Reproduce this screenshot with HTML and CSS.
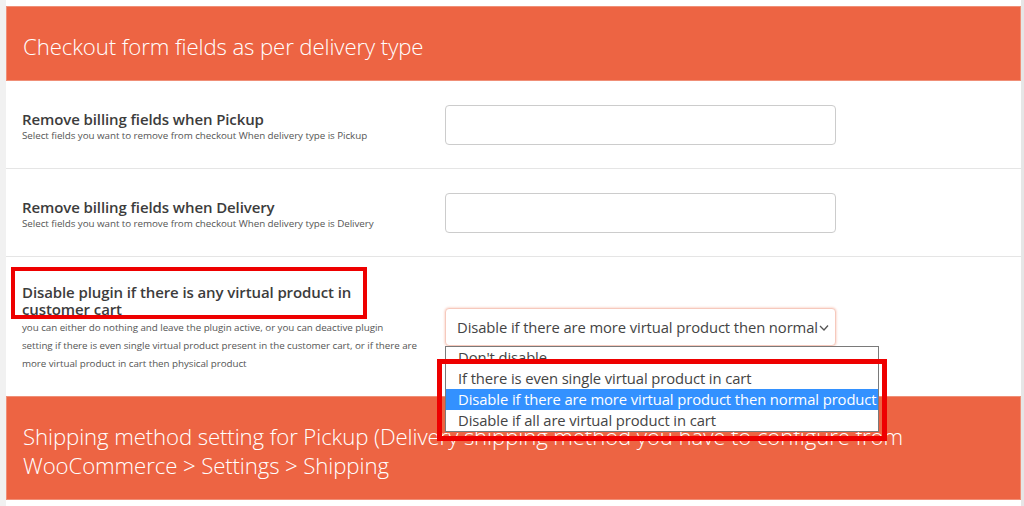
FILE: index.html
```html
<!DOCTYPE html>
<html lang="en">
<head>
<meta charset="utf-8">
<title>Checkout form fields</title>
<link rel="stylesheet" href="styles.css">
</head>
<body>
<div class="page">
  <div class="panel">
    <h2 class="section-head">Checkout form fields as per delivery type</h2>

    <div class="row">
      <div class="label-cell">
        <div class="title">Remove billing fields when Pickup</div>
        <div class="desc">Select fields you want to remove from checkout When delivery type is Pickup</div>
      </div>
      <div class="field-cell">
        <div class="input"></div>
      </div>
    </div>

    <div class="row">
      <div class="label-cell">
        <div class="title">Remove billing fields when Delivery</div>
        <div class="desc">Select fields you want to remove from checkout When delivery type is Delivery</div>
      </div>
      <div class="field-cell">
        <div class="input"></div>
      </div>
    </div>

    <div class="row row-tall">
      <div class="label-cell">
        <div class="title title-wrap">Disable plugin if there is any virtual product in customer cart</div>
        <div class="desc desc-long">you can either do nothing and leave the plugin active, or you can deactive plugin<br>setting if there is even single virtual product present in the customer cart, or if there are<br>more virtual product in cart then physical product</div>
        <div class="mark mark-label"></div>
      </div>
      <div class="field-cell">
        <div class="select">
          <span class="select-text">Disable if there are more virtual product then normal product</span>
          <svg class="chev" width="10" height="8" viewBox="0 0 10 8"><path d="M1 2 L5 6 L9 1.5" fill="none" stroke="#555" stroke-width="1.3"/></svg>
        </div>
        <ul class="dropdown">
          <li>Don't disable</li>
          <li>If there is even single virtual product in cart</li>
          <li class="selected">Disable if there are more virtual product then normal product</li>
          <li>Disable if all are virtual product in cart</li>
        </ul>
        <div class="mark mark-list"></div>
      </div>
    </div>

    <h2 class="section-head">Shipping method setting for Pickup (Delivery shipping method you have to configure from WooCommerce &gt; Settings &gt; Shipping</h2>
  </div>
</div>
</body>
</html>
```

FILE: styles.css
```css
* { box-sizing: border-box; }

html, body {
  margin: 0;
  padding: 0;
  background: #ffffff;
  font-family: "Open Sans", "Noto Sans", sans-serif;
  color: #32373c;
}

.page {
  display: flex;
  width: 1024px;
  height: 506px;
  overflow: hidden;
  padding-top: 6px;
  background: #fff;
  border-left: 6px solid #f1f1f1;
  border-right: 3px solid #e6e6e6;
}

.panel {
  flex: 1;
  display: flex;
  flex-direction: column;
  position: relative;
}

.section-head {
  margin: 0;
  background: #ed6443;
  color: #fff;
  font-weight: 300;
  font-size: 22.2px;
  line-height: 29px;
  padding: 25px 16px 19px 16px;
  border: 1px solid #f08f77;
  letter-spacing: -0.1px;
}

.row {
  display: grid;
  grid-template-columns: 439px 1fr;
  align-items: center;
  height: 88px;
  border-bottom: 1px solid #e5e5e5;
}

.row-tall {
  height: 139px;
  border-bottom: none;
}

.label-cell {
  position: relative;
  padding-left: 16px;
  padding-top: 4px;
}

.title {
  font-weight: 600;
  font-size: 15px;
  line-height: 18px;
  color: #3c3c3c;
  letter-spacing: -0.1px;
}

.title-wrap {
  width: 350px;
  line-height: 17px;
}

.desc {
  font-size: 9.8px;
  line-height: 16px;
  color: #555;
  letter-spacing: -0.05px;
}

.desc-long {
  width: 420px;
  line-height: 18px;
  margin-top: 1px;
  white-space: nowrap;
}

.field-cell {
  position: relative;
}

.input {
  width: 391px;
  height: 40px;
  border: 1px solid #cccccc;
  border-radius: 4px;
  background: #fff;
}

.select {
  position: relative;
  width: 391px;
  height: 38px;
  border: 1px solid #f6c9bd;
  border-radius: 4px;
  box-shadow: 0 0 2px 1px #fbe0d8;
  background: #fff;
  display: flex;
  align-items: center;
  padding: 0 14px 0 11px;
  overflow: hidden;
}

.select-text {
  white-space: nowrap;
  overflow: hidden;
  font-size: 14.8px;
  color: #444;
  letter-spacing: -0.1px;
}

.chev {
  position: absolute;
  right: 6px;
  top: 15px;
}

.dropdown {
  position: absolute;
  left: 0;
  top: 38px;
  margin: 0;
  padding: 0;
  list-style: none;
  width: 434px;
  background: #fff;
  border: 1px solid #7a7a7a;
  z-index: 5;
}

.dropdown li {
  height: 21px;
  line-height: 21px;
  padding-left: 12px;
  font-size: 14.8px;
  color: #444;
  white-space: nowrap;
  letter-spacing: -0.1px;
}

.dropdown li.selected {
  background: #3391ff;
  color: #fff;
}

.mark {
  position: absolute;
  border: 5px solid #ee0000;
  z-index: 10;
  pointer-events: none;
}

.mark-label {
  left: 5px;
  top: -13px;
  width: 356px;
  height: 52px;
  border-width: 4px;
}

.mark-list {
  left: -8px;
  top: 51px;
  width: 450px;
  height: 82px;
}
```
